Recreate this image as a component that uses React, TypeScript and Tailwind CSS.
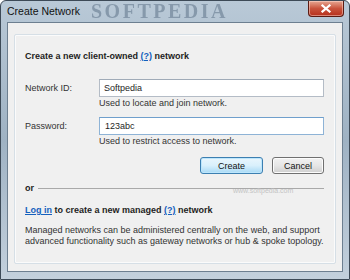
export default function App() {
  const font = "font-['Liberation_Sans',Arial,sans-serif]"
  return (
    <div className={`relative flex h-[280px] w-[350px] flex-col overflow-hidden rounded-t-[6px] border border-[#3d4a57] bg-gradient-to-b from-[#b9c9d7] via-[#9fb2c3] to-[#c3d0dc] ${font} text-[9px] text-[#1e1e1e]`}>
      {/* title bar */}
      <div className="relative flex h-[21px] shrink-0 items-start justify-between pl-[6px] pr-[5px]">
        <span className="relative z-10 mt-[4px] text-[10.5px] leading-[13px] text-[#111]">Create Network</span>
        <span className="pointer-events-none absolute left-[90px] top-0 font-['Liberation_Serif',serif] text-[20px] font-bold leading-[20px] tracking-[2.5px] text-[#5f7489] opacity-55 blur-[0.7px]">
          SOFTPEDIA
        </span>
        <div className="flex h-[16px] w-[36px] items-center justify-center rounded-b-[4px] border border-t-0 border-[#5b1b12] bg-gradient-to-b from-[#e6a793] via-[#c9533c] to-[#b52e1a] shadow-[inset_0_0_0_1px_rgba(255,220,210,0.5)]">
          <svg width="10" height="9" viewBox="0 0 10 9">
            <path d="M1.5 1.5 L8.5 7.5 M8.5 1.5 L1.5 7.5" stroke="#fff" strokeWidth="2.2" strokeLinecap="square" />
          </svg>
        </div>
      </div>

      {/* client area */}
      <div className="mx-[6px] mb-[7px] flex flex-1 flex-col border border-[#6d7f90] bg-[#f0f0f0] pb-[7px] pl-[6px] pr-[6px] pt-[11px]">
        <div className="relative flex flex-1 flex-col rounded-[2px] border border-[#d6dfe6] pl-[10px] pr-[11px] shadow-[inset_0_0_0_1px_#fbfbfb]">
          <p className="mt-[15px] whitespace-nowrap text-[9px] font-bold leading-[12px]">
            Create a new client-owned <span className="text-[#1560bd] underline">(?)</span> network
          </p>

          <div className="mt-[17px] flex items-center">
            <span className="w-[74px] shrink-0 leading-[12px] text-[#333]">Network ID:</span>
            <div className="flex h-[18px] flex-1 items-center border border-[#b4bcc6] border-t-[#a0abb8] bg-white pl-[4px] leading-[12px]">
              Softpedia
            </div>
          </div>
          <p className="ml-[74px] leading-[12px] text-[#333]">Used to locate and join network.</p>

          <div className="mt-[8px] flex items-center">
            <span className="w-[74px] shrink-0 leading-[12px] text-[#333]">Password:</span>
            <div className="flex h-[18px] flex-1 items-center border border-[#8eb3d6] border-t-[#6f9fcc] bg-white pl-[5px] leading-[12px]">
              123abc
            </div>
          </div>
          <p className="ml-[74px] leading-[12px] text-[#333]">Used to restrict access to network.</p>

          <div className="mt-[10px] flex justify-end gap-[9px]">
            <button className="h-[17px] w-[63px] rounded-[3px] border border-[#3c7fb1] bg-gradient-to-b from-[#eaf6fd] via-[#d9f0fc] to-[#a7d9f5] text-[9px] leading-[12px] text-[#111] shadow-[inset_0_0_0_1px_#bde6fc]">
              Create
            </button>
            <button className="h-[17px] w-[52px] rounded-[3px] border border-[#707070] bg-gradient-to-b from-[#f2f2f2] via-[#e6e6e6] to-[#cfcfcf] text-[9px] leading-[12px] text-[#111] shadow-[inset_0_0_0_1px_#fcfcfc]">
              Cancel
            </button>
          </div>

          <div className="relative mt-[8px] flex items-center gap-[4px]">
            <span className="font-bold leading-[12px]">or</span>
            <div className="h-px flex-1 bg-[#a9a9a9]" />
            <span className="pointer-events-none absolute left-[208px] top-[5px] text-[7px] leading-[8px] text-[#c4c4c4]">www.softpedia.com</span>
          </div>

          <p className="mt-[10px] whitespace-nowrap font-bold leading-[12px]">
            <span className="text-[#1560bd] underline">Log in</span> to create a new managed{" "}
            <span className="text-[#1560bd] underline">(?)</span> network
          </p>

          <p className="mt-[9px] whitespace-nowrap leading-[11px] text-[#333]">
            Managed networks can be administered centrally on the web, and support
            <br />
            advanced functionality such as gateway networks or hub &amp; spoke topology.
          </p>
        </div>
      </div>
    </div>
  )
}
